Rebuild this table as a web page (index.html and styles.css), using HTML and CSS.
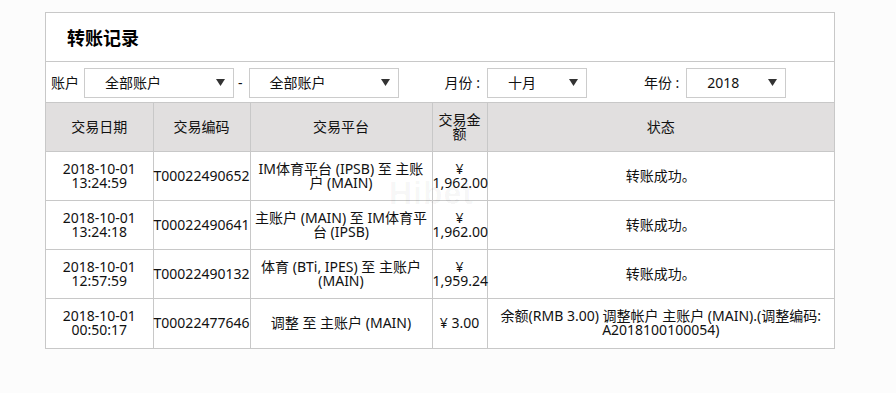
FILE: index.html
```html
<!DOCTYPE html>
<html lang="zh-CN">
<head>
<meta charset="utf-8">
<title>转账记录</title>
<link rel="stylesheet" href="styles.css">
</head>
<body>
<div class="panel">
  <div class="title">转账记录</div>
  <div class="filters">
    <span class="label">账户</span>
    <div class="select wide"><span>全部账户</span><svg class="arrow" width="9" height="7" viewBox="0 0 9 7"><path d="M0 0H9L4.5 7Z" fill="#333"/></svg></div>
    <span class="dash">-</span>
    <div class="select wide"><span>全部账户</span><svg class="arrow" width="9" height="7" viewBox="0 0 9 7"><path d="M0 0H9L4.5 7Z" fill="#333"/></svg></div>
    <span class="label month">月份 :</span>
    <div class="select narrow"><span>十月</span><svg class="arrow" width="9" height="7" viewBox="0 0 9 7"><path d="M0 0H9L4.5 7Z" fill="#333"/></svg></div>
    <span class="label year">年份 :</span>
    <div class="select narrow"><span>2018</span><svg class="arrow" width="9" height="7" viewBox="0 0 9 7"><path d="M0 0H9L4.5 7Z" fill="#333"/></svg></div>
  </div>
  <div class="table-wrap">
    <table class="records">
      <colgroup>
        <col class="c1"><col class="c2"><col class="c3"><col class="c4"><col class="c5">
      </colgroup>
      <thead>
        <tr><th>交易日期</th><th>交易编码</th><th>交易平台</th><th>交易金额</th><th>状态</th></tr>
      </thead>
      <tbody>
        <tr><td>2018-10-01<br>13:24:59</td><td>T00022490652</td><td class="platform">IM体育平台 (IPSB) 至 主账户 (MAIN)</td><td>¥ 1,962.00</td><td>转账成功。</td></tr>
        <tr><td>2018-10-01<br>13:24:18</td><td>T00022490641</td><td class="platform">主账户 (MAIN) 至 IM体育平台 (IPSB)</td><td>¥ 1,962.00</td><td>转账成功。</td></tr>
        <tr><td>2018-10-01<br>12:57:59</td><td>T00022490132</td><td class="platform">体育 (BTi, IPES) 至 主账户 (MAIN)</td><td>¥ 1,959.24</td><td>转账成功。</td></tr>
        <tr><td>2018-10-01<br>00:50:17</td><td>T00022477646</td><td class="platform">调整 至 主账户 (MAIN)</td><td>¥ 3.00</td><td>余额(RMB 3.00) 调整帐户 主账户 (MAIN).(调整编码: A2018100100054)</td></tr>
      </tbody>
    </table>
    <div class="watermark">Hibet</div>
  </div>
</div>
</body>
</html>
```
FILE: styles.css
```css
html, body {
  margin: 0;
  padding: 0;
  background: #fcfcfc;
}
body {
  font-family: "Noto Sans", "Noto Sans CJK SC", sans-serif;
  font-size: 14px;
  color: #111;
}
.panel {
  box-sizing: border-box;
  width: 790px;
  margin: 12px 0 0 45px;
  border: 1px solid #c8c8c8;
  background: #fff;
}
.title {
  height: 48px;
  border-bottom: 1px solid #c8c8c8;
  padding-left: 21px;
  display: flex;
  align-items: center;
  font-size: 18px;
  font-weight: bold;
  color: #000;
}
.filters {
  height: 40px;
  display: flex;
  align-items: center;
  padding: 1px 0 0 5px;
  box-sizing: border-box;
}
.label {
  line-height: 1;
}
.select {
  box-sizing: border-box;
  height: 30px;
  border: 1px solid #cccccc;
  background: #fff;
  display: flex;
  align-items: center;
  justify-content: space-between;
  padding: 0 8px 0 20px;
  margin-left: 5px;
}
.select.wide { width: 150px; }
.select.narrow { width: 100px; }
.select span { line-height: 1; }
.arrow { display: block; }
.dash {
  margin: 0 1px 0 4px;
}
.label.month { margin: 0 2px 0 46px; }
.label.year { margin: 0 2px 0 57px; }
.table-wrap {
  position: relative;
}
.records {
  width: 100%;
  border-collapse: collapse;
  table-layout: fixed;
}
.c1 { width: 107px; }
.c2 { width: 97px; }
.c3 { width: 182px; }
.c4 { width: 55px; }
.records th, .records td {
  border: 1px solid #c8c8c8;
  height: 49px;
  padding: 0;
  text-align: center;
  vertical-align: middle;
  line-height: 14px;
  font-weight: normal;
  box-sizing: border-box;
}
.records th {
  background: #e1dfdf;
  padding: 0 4px;
}
.records td.platform { padding: 0 4px; }
.records tr > :first-child { border-left: 0; }
.records tr > :last-child { border-right: 0; }
.records tbody tr:last-child td { border-bottom: 0; }
.records td:nth-child(5) { padding: 0 6px; }
.watermark {
  position: absolute;
  left: 343px;
  top: 73px;
  font-size: 32px;
  font-weight: bold;
  font-family: "Liberation Sans", sans-serif;
  color: rgba(0, 0, 0, 0.035);
  letter-spacing: 1px;
  pointer-events: none;
}
```
